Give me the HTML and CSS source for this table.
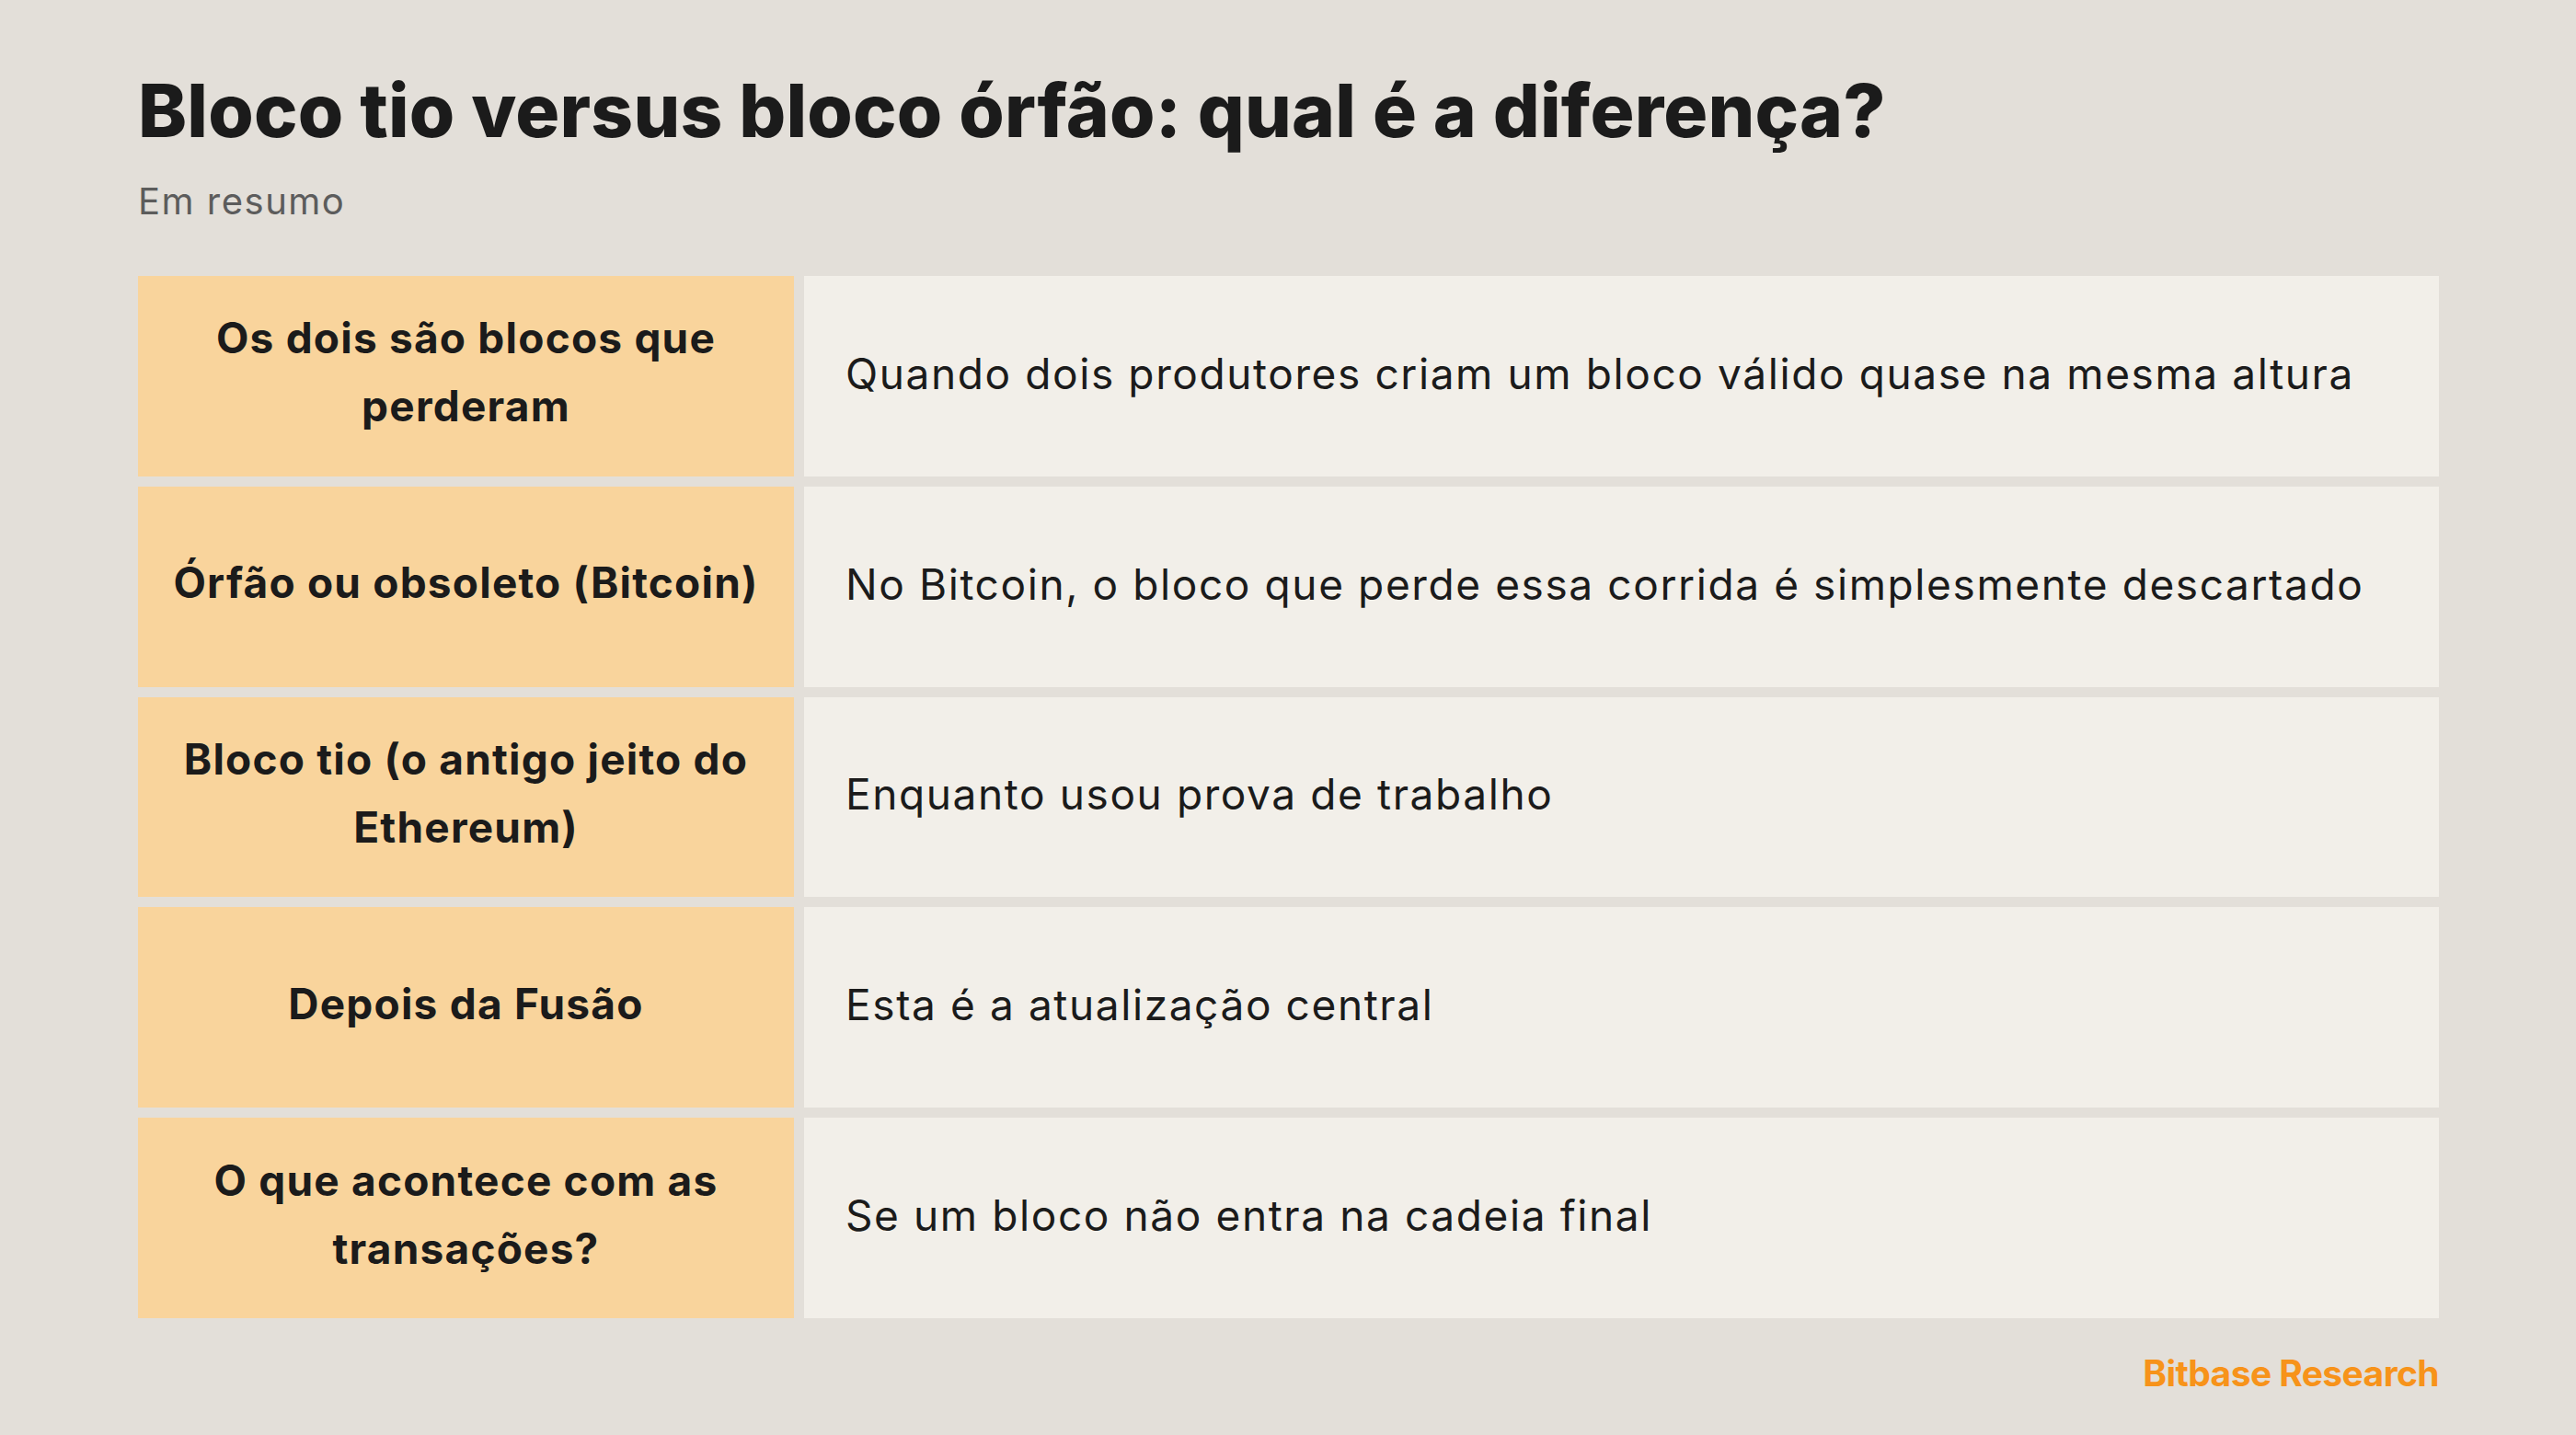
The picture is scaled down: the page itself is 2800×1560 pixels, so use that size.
FILE: index.html
```html
<!DOCTYPE html>
<html lang="pt">
<head>
<meta charset="utf-8">
<title>Bloco tio versus bloco órfão</title>
<link rel="stylesheet" href="styles.css">
</head>
<body>
<main class="page">
  <header class="head">
    <h1 class="title">Bloco tio versus bloco órfão: qual é a diferença?</h1>
    <p class="subtitle">Em resumo</p>
  </header>
  <section class="table">
    <div class="key">Os dois são blocos que<br>perderam</div>
    <div class="val">Quando dois produtores criam um bloco válido quase na mesma altura</div>
    <div class="key">Órfão ou obsoleto (Bitcoin)</div>
    <div class="val">No Bitcoin, o bloco que perde essa corrida é simplesmente descartado</div>
    <div class="key">Bloco tio (o antigo jeito do<br>Ethereum)</div>
    <div class="val">Enquanto usou prova de trabalho</div>
    <div class="key">Depois da Fusão</div>
    <div class="val">Esta é a atualização central</div>
    <div class="key">O que acontece com as<br>transações?</div>
    <div class="val">Se um bloco não entra na cadeia final</div>
  </section>
  <footer class="brand">Bitbase Research</footer>
</main>
</body>
</html>
```
FILE: styles.css
```css
* { box-sizing: border-box; }
html, body {
  margin: 0;
  padding: 0;
}
body {
  width: 2800px;
  height: 1560px;
  background: #E3DFD9;
  color: #1B1B1B;
  font-family: Inter, "Noto Sans", sans-serif;
  overflow: hidden;
}
.page {
  padding: 72px 149px 0 150px;
  display: flex;
  flex-direction: column;
}
.head {
  display: flex;
  flex-direction: column;
}
.title {
  margin: 0;
  font-size: 80px;
  line-height: 96px;
  font-weight: 800;
  letter-spacing: 0.2px;
  color: #1B1B1B;
}
.subtitle {
  margin: 27px 0 0;
  font-size: 40px;
  line-height: 48px;
  font-weight: 400;
  letter-spacing: 1.5px;
  color: #5C5C5C;
}
.table {
  margin-top: 57px;
  height: 1133px;
  display: grid;
  grid-template-columns: 713px 1fr;
  grid-template-rows: repeat(5, 1fr);
  gap: 11px;
}
.key, .val {
  display: flex;
  align-items: center;
  font-size: 46px;
  line-height: 74px;
}
.key {
  background: #F9D49C;
  justify-content: center;
  text-align: center;
  font-weight: 700;
  letter-spacing: 1.2px;
  padding: 0 20px 9px;
}
.val {
  background: #F2EFE9;
  font-weight: 400;
  letter-spacing: 1.6px;
  padding: 0 30px 6px 45px;
}
.brand {
  margin-top: 36px;
  text-align: right;
  font-size: 39px;
  line-height: 48px;
  font-weight: 700;
  letter-spacing: -0.6px;
  color: #F7931A;
}
```
